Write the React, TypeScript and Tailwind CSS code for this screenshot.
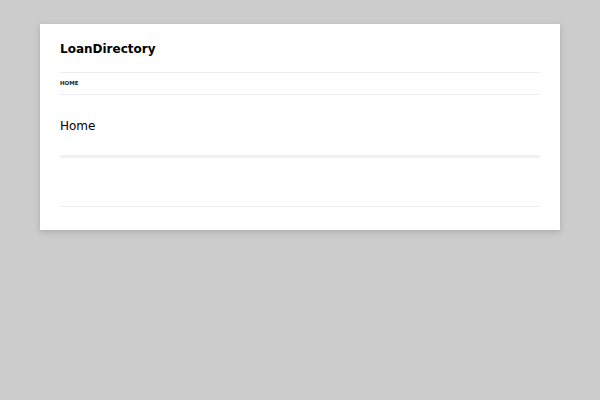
import React from 'react';

const App = () => {
  return (
    <div className="min-h-[400px] w-full bg-[#cccccc] pt-6 pb-6 px-10" style={{ fontFamily: '"DejaVu Sans", sans-serif' }}>
      <div className="bg-white px-5 shadow-[0_2px_6px_rgba(100,100,100,0.3)]">
        <header className="pt-[15px]">
          <h1 className="text-[12px] font-bold leading-[20px] text-black pb-[13px]">LoanDirectory</h1>
          <nav className="border-t border-b border-[#ededed] py-[6px]">
            <ul className="flex">
              <li className="text-[5.5px] font-bold uppercase leading-[9px] text-[#222]">Home</li>
            </ul>
          </nav>
        </header>
        <main className="pt-[22px]">
          <h2 className="text-[12px] leading-[18px] text-black pb-[20px] border-b-[3px] border-[#f0f0f0]">Home</h2>
          <div className="h-[49px] border-b border-[#ededed]"></div>
        </main>
        <div className="h-[23px]"></div>
      </div>
    </div>
  );
};

export default App;
